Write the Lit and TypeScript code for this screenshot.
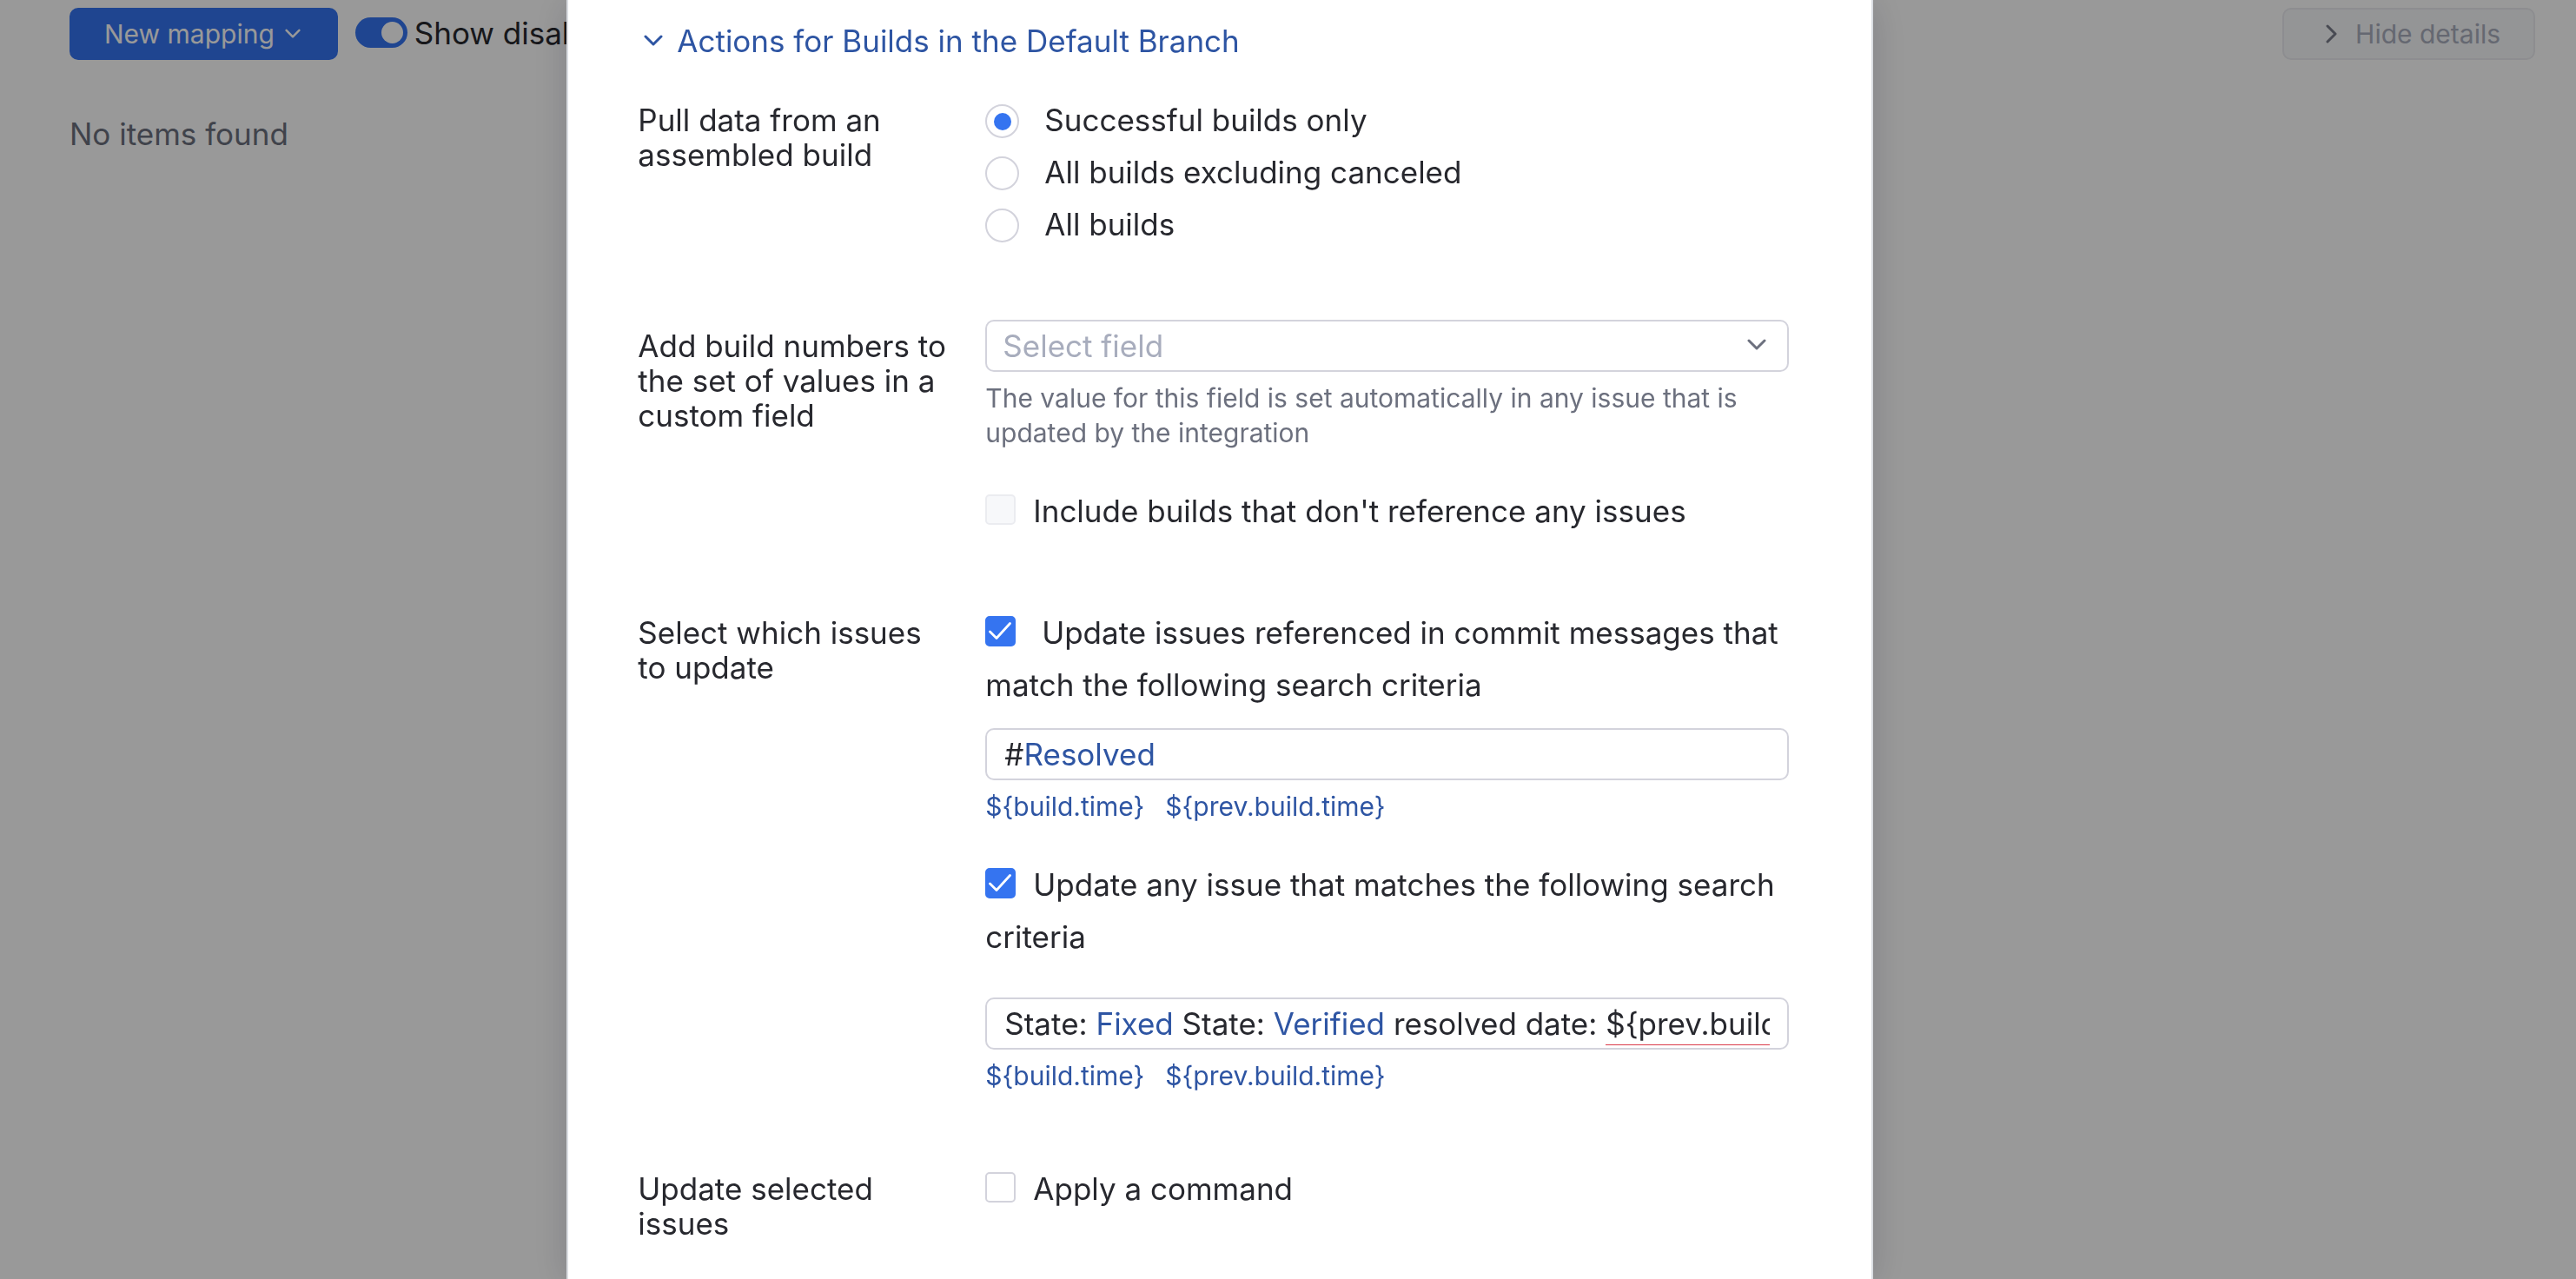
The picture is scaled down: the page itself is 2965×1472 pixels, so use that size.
import { LitElement, html, css, svg, nothing } from "lit";
import { customElement, property, state } from "lit/decorators.js";

type Token = { text: string; kind?: "value" | "error" };

const buildVariables = ["${build.time}", "${prev.build.time}"];

const resolvedQuery: Token[] = [{ text: "#" }, { text: "Resolved", kind: "value" }];

const stateQuery: Token[] = [
  { text: "State: " },
  { text: "Fixed", kind: "value" },
  { text: " State: " },
  { text: "Verified", kind: "value" },
  { text: " resolved date: " },
  { text: "${prev.build.time}", kind: "error" },
];

const buildFilters = [
  { id: "successful", label: "Successful builds only" },
  { id: "not-canceled", label: "All builds excluding canceled" },
  { id: "all", label: "All builds" },
];

const chevronDown = svg`<path d="M2 2l9 9 9-9" fill="none" stroke="currentColor" stroke-width="3" stroke-linecap="round" stroke-linejoin="round" />`;

/** Text box whose query is coloured by a highlight layer over the native input. */
@customElement("query-input")
export class QueryInput extends LitElement {
  @property({ attribute: false }) tokens: Token[] = [];
  @property() label = "";

  static styles = css`
    :host {
      display: block;
    }
    .box {
      position: relative;
      height: 60px;
      box-sizing: border-box;
      border: 2px solid #d3d3dc;
      border-radius: 10px;
      background: #fff;
    }
    .field,
    .highlight {
      box-sizing: border-box;
      width: 100%;
      height: 56px;
      padding: 0;
      border: 0;
      font: 400 35px/56px Inter, "Liberation Sans", sans-serif;
    }
    .field {
      display: block;
      padding: 0 20px;
      border-radius: 8px;
      outline: none;
      background: transparent;
      color: transparent;
      caret-color: #27282e;
    }
    .highlight {
      position: absolute;
      top: 0;
      left: 20px;
      width: calc(100% - 40px);
      overflow: hidden;
      white-space: pre;
      color: #27282e;
      pointer-events: none;
    }
    .value {
      color: #2e55a3;
    }
    .error {
      display: inline-block;
      height: 52px;
      border-bottom: 1px solid #db3b4b;
    }
  `;

  render() {
    return html`<div class="box">
      <input class="field" type="text" aria-label=${this.label} .value=${this.tokens.map((t) => t.text).join("")} />
      <div class="highlight" aria-hidden="true">${this.tokens.map((t) => html`<span class=${t.kind ?? "plain"}>${t.text}</span>`)}</div>
    </div>`;
  }
}

@customElement("app-root")
export class AppRoot extends LitElement {
  @state() private expanded = true;

  static styles = css`
    :host {
      display: block;
      min-height: 100vh;
      background: #fff;
      color: #27282e;
      font: 400 35px/40px Inter, "Liberation Sans", sans-serif;
    }
    button,
    select,
    input {
      margin: 0;
      font: inherit;
    }
    svg {
      display: block;
      flex: none;
    }

    /* Page under the dialog */
    .toolbar {
      display: flex;
      align-items: center;
      padding: 9px 47px 0 80px;
    }
    .btn {
      display: flex;
      align-items: center;
      box-sizing: border-box;
      height: 60px;
      border: 2px solid #ebecf0;
      border-radius: 10px;
      padding: 0 38px;
      background: #f7f8fa;
      color: #a8adbd;
      font-size: 30px;
      white-space: nowrap;
    }
    .btn.primary {
      gap: 12px;
      padding-right: 41px;
      border-color: #3574f0;
      background: #3574f0;
      color: #fff;
    }
    .btn.details {
      gap: 20px;
      margin-left: auto;
      padding-left: 48px;
    }
    .details-icon {
      color: #7a7d8a;
    }
    .switch {
      display: flex;
      align-items: center;
      gap: 8px;
      margin-left: 20px;
      padding-bottom: 3px;
      white-space: nowrap;
    }
    .toggle {
      display: flex;
      align-items: center;
      justify-content: flex-end;
      appearance: none;
      width: 60px;
      height: 35px;
      padding: 0 5px;
      border-radius: 18px;
      background: #3574f0;
    }
    .toggle::before {
      content: "";
      width: 25px;
      height: 25px;
      border-radius: 50%;
      background: #fff;
    }
    .toggle:not(:checked) {
      justify-content: flex-start;
      background: #a8adbd;
    }
    .empty {
      margin: 0;
      padding: 65px 80px;
      color: #6c707e;
    }

    /* Dialog */
    .overlay {
      position: fixed;
      inset: 0;
      overflow: auto;
      background: rgba(0, 0, 0, 0.4);
    }
    .dialog {
      box-sizing: border-box;
      width: min(1504px, 100%);
      min-height: 100%;
      margin-left: 22%;
      padding: 27px 95px 20px 80px;
      border: solid #dadde2;
      border-width: 0 2px;
      background: #fff;
      box-shadow: 0 5px 40px rgba(1, 15, 35, 0.16);
    }
    .section-toggle {
      display: flex;
      align-items: center;
      gap: 16px;
      padding: 0 0 0 7px;
      border: 0;
      background: none;
      color: #2e55a3;
    }
    .rows {
      display: grid;
      gap: 80px;
      margin-top: 41px;
    }
    .row {
      display: grid;
      grid-template-columns: 360px minmax(0, 1fr);
      column-gap: 40px;
    }
    .row-label {
      padding-top: 10px;
    }
    .group {
      display: grid;
      gap: 40px;
    }
    .radio {
      display: flex;
      gap: 29px;
      line-height: 60px;
    }
    .radio-input {
      display: grid;
      place-items: center;
      appearance: none;
      box-sizing: border-box;
      width: 39px;
      height: 39px;
      margin-top: 12px;
      border: 2px solid #d3d3dc;
      border-radius: 50%;
      background: #fff;
    }
    .radio-input:checked::before {
      content: "";
      width: 20px;
      height: 20px;
      border-radius: 50%;
      background: #3574f0;
    }
    .select-box {
      position: relative;
    }
    .select {
      display: block;
      appearance: none;
      box-sizing: border-box;
      width: 100%;
      height: 60px;
      padding: 0 60px 0 18px;
      border: 2px solid #d3d3dc;
      border-radius: 10px;
      background: #fff;
      color: #a8adbd;
    }
    .select-icon {
      position: absolute;
      top: 22px;
      right: 26px;
      color: #6c707e;
      pointer-events: none;
    }
    .help {
      margin: 10px 0 0;
      color: #6c707e;
      font-size: 30px;
    }
    .check-label {
      display: block;
      line-height: 60px;
    }
    .check {
      position: relative;
      display: inline-block;
      width: 35px;
      height: 35px;
      margin-right: 20px;
      vertical-align: -3px;
    }
    .check-input {
      display: block;
      appearance: none;
      box-sizing: border-box;
      width: 35px;
      height: 35px;
      border: 2px solid #d3d3dc;
      border-radius: 5px;
      background: #fff;
    }
    .check-input:checked {
      border-color: #3574f0;
      background: #3574f0;
    }
    .check-input:disabled {
      border-color: #ebecf0;
      background: #f7f8fa;
    }
    .tick {
      position: absolute;
      inset: 0;
      pointer-events: none;
    }
    .near {
      margin-top: 20px;
    }
    .far {
      margin-top: 40px;
    }
    .variables {
      display: flex;
      gap: 24px;
      margin-top: 10px;
      font-size: 30px;
    }
    .link {
      color: #2e55a3;
      text-decoration: none;
    }
  `;

  private check(checked: boolean, disabled = false) {
    return html`<span class="check"
      ><input class="check-input" type="checkbox" .checked=${checked} ?disabled=${disabled} />${checked
        ? html`<svg class="tick" width="35" height="35" viewBox="0 0 35 35" aria-hidden="true">
            <path d="M5.5 18L13 25.5L28.5 8.5" fill="none" stroke="#fff" stroke-width="2.8" stroke-linecap="round" stroke-linejoin="round" />
          </svg>`
        : nothing}</span
    >`;
  }

  private variables() {
    return html`<div class="variables">${buildVariables.map((v) => html`<a class="link" href="#">${v}</a>`)}</div>`;
  }

  private rows() {
    return html`<div class="rows">
      <div class="row">
        <div class="row-label" id="pull-label">Pull data from an assembled build</div>
        <div role="radiogroup" aria-labelledby="pull-label">
          ${buildFilters.map(
            (f, i) => html`<label class="radio"
              ><input class="radio-input" type="radio" name="build-filter" value=${f.id} ?checked=${i === 0} />${f.label}</label
            >`,
          )}
        </div>
      </div>
      <div class="row">
        <label class="row-label" for="custom-field">Add build numbers to the set of values in a custom field</label>
        <div class="group">
          <div>
            <div class="select-box">
              <select class="select" id="custom-field">
                <option>Select field</option>
              </select>
              <svg class="select-icon" width="22" height="14" viewBox="0 0 22 14" aria-hidden="true">${chevronDown}</svg>
            </div>
            <p class="help">The value for this field is set automatically in any issue that is updated by the integration</p>
          </div>
          <label class="check-label">${this.check(false, true)}Include builds that don't reference any issues</label>
        </div>
      </div>
      <div class="row">
        <div class="row-label">Select which issues to update</div>
        <div class="group">
          <div>
            <label class="check-label"
              >${this.check(true)}&nbsp;Update issues referenced in commit messages that match the following search criteria</label
            >
            <query-input class="near" label="Search criteria for referenced issues" .tokens=${resolvedQuery}></query-input>
            ${this.variables()}
          </div>
          <div>
            <label class="check-label">${this.check(true)}Update any issue that matches the following search criteria</label>
            <query-input class="far" label="Search criteria for any issue" .tokens=${stateQuery}></query-input>
            ${this.variables()}
          </div>
        </div>
      </div>
      <div class="row">
        <div class="row-label">Update selected issues</div>
        <label class="check-label">${this.check(false)}Apply a command</label>
      </div>
    </div>`;
  }

  render() {
    return html`
      <main>
        <div class="toolbar">
          <button class="btn primary" type="button">
            New mapping
            <svg width="18" height="12" viewBox="0 0 22 14" aria-hidden="true">${chevronDown}</svg>
          </button>
          <label class="switch"><input class="toggle" type="checkbox" role="switch" checked />Show disabled</label>
          <button class="btn details" type="button">
            <svg class="details-icon" width="14" height="22" viewBox="0 0 14 22" aria-hidden="true">
              <path d="M2 2l9 9-9 9" fill="none" stroke="currentColor" stroke-width="3" stroke-linecap="round" stroke-linejoin="round" />
            </svg>
            Hide details
          </button>
        </div>
        <p class="empty">No items found</p>
      </main>
      <div class="overlay">
        <section class="dialog" role="dialog" aria-label="Build server mapping">
          <button
            class="section-toggle"
            type="button"
            aria-expanded=${this.expanded ? "true" : "false"}
            @click=${() => (this.expanded = !this.expanded)}
          >
            <svg width="22" height="14" viewBox="0 0 22 14" aria-hidden="true">${chevronDown}</svg>
            Actions for Builds in the Default Branch
          </button>
          ${this.expanded ? this.rows() : nothing}
        </section>
      </div>
    `;
  }
}
